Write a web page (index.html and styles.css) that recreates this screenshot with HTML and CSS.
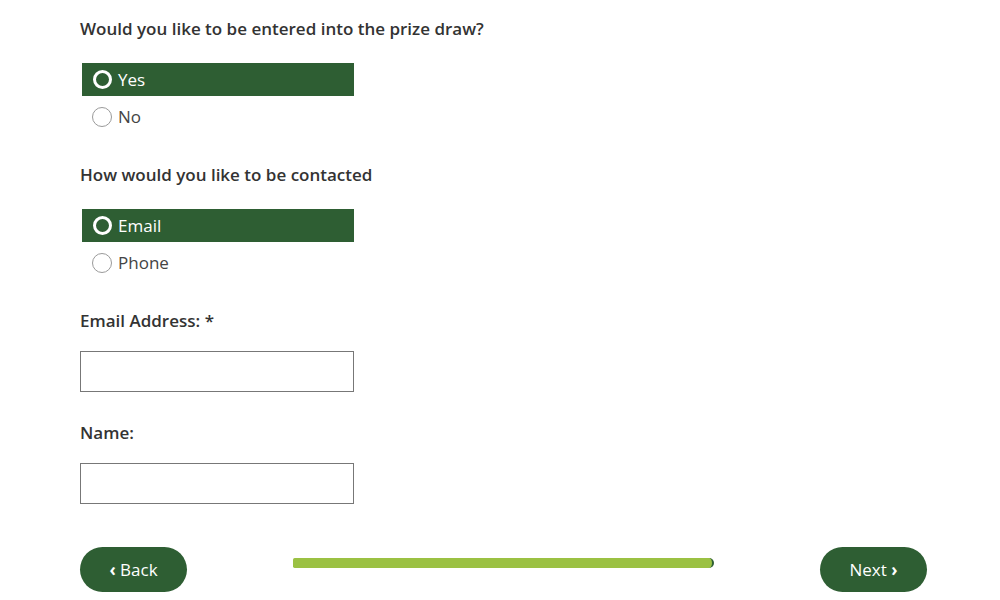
FILE: index.html
```html
<!DOCTYPE html>
<html>
  <head>
    <title>Prize Draw</title>
    <link rel="stylesheet" href="styles.css">
  </head>
  <body>
    <form class="survey" action="">
      <div class="question">
        <p class="label">Would you like to be entered into the prize draw?</p>
        <div class="options">
          <label class="option selected"><input type="radio" name="draw" value="yes" checked><span class="dot"></span>Yes</label>
          <label class="option"><input type="radio" name="draw" value="no"><span class="dot"></span>No</label>
        </div>
      </div>

      <div class="question">
        <p class="label">How would you like to be contacted</p>
        <div class="options">
          <label class="option selected"><input type="radio" name="contact" value="email" checked><span class="dot"></span>Email</label>
          <label class="option"><input type="radio" name="contact" value="phone"><span class="dot"></span>Phone</label>
        </div>
      </div>

      <div class="field">
        <p class="label">Email Address: *</p>
        <input type="text" class="text-input" name="email">
      </div>

      <div class="field">
        <p class="label">Name:</p>
        <input type="text" class="text-input" name="name">
      </div>

      <div class="footer">
        <button type="button" class="nav-btn"><span class="chev">&#8249;</span> Back</button>
        <div class="progress"><div class="progress-fill"></div></div>
        <button type="button" class="nav-btn">Next <span class="chev">&#8250;</span></button>
      </div>
    </form>
  </body>
</html>
```

FILE: styles.css
```css
body { margin: 0; background: #fff; color: #333; font-family: "Open Sans", "Liberation Sans", sans-serif; }
.survey { padding: 17px 73px 0 80px; display: flex; flex-direction: column; }

.label { margin: 0; font-size: 17px; font-weight: 600; line-height: 24px; color: #333; }

.question { display: flex; flex-direction: column; gap: 22px; margin-bottom: 30px; }
.options { display: flex; flex-direction: column; gap: 4px; width: 272px; margin-left: 2px; }
.option { display: flex; align-items: center; gap: 6px; height: 33px; padding-left: 10px; box-sizing: border-box; font-size: 17px; color: #444; cursor: pointer; }
.option input { display: none; }
.option .dot { width: 20px; height: 20px; border-radius: 50%; border: 1px solid #9a9a9a; background: #fff; box-sizing: border-box; }
.option.selected { background: #2e5e33; color: #fff; }
.option.selected .dot { border: 3px solid #fff; background: transparent; width: 19px; height: 19px; margin-left: 1px; }

.field { display: flex; flex-direction: column; gap: 18px; margin-bottom: 29px; }
.text-input { width: 274px; height: 41px; box-sizing: border-box; border: 1px solid #777; padding: 0 8px; font-family: inherit; font-size: 16px; }
.text-input:focus { outline: none; }

.footer { display: flex; align-items: center; justify-content: space-between; margin-top: 14px; }
.nav-btn { width: 107px; height: 45px; border: none; border-radius: 23px; background: #2e5e33; color: #fff; font-family: inherit; font-size: 17px; cursor: pointer; }
.chev { font-weight: 700; }
.progress { width: 421px; height: 10px; margin-bottom: 14px; }
.progress-fill { height: 100%; background: #9bc143; border-radius: 2px 6px 6px 2px; border-right: 2px solid #2e5e33; box-sizing: border-box; }
```
